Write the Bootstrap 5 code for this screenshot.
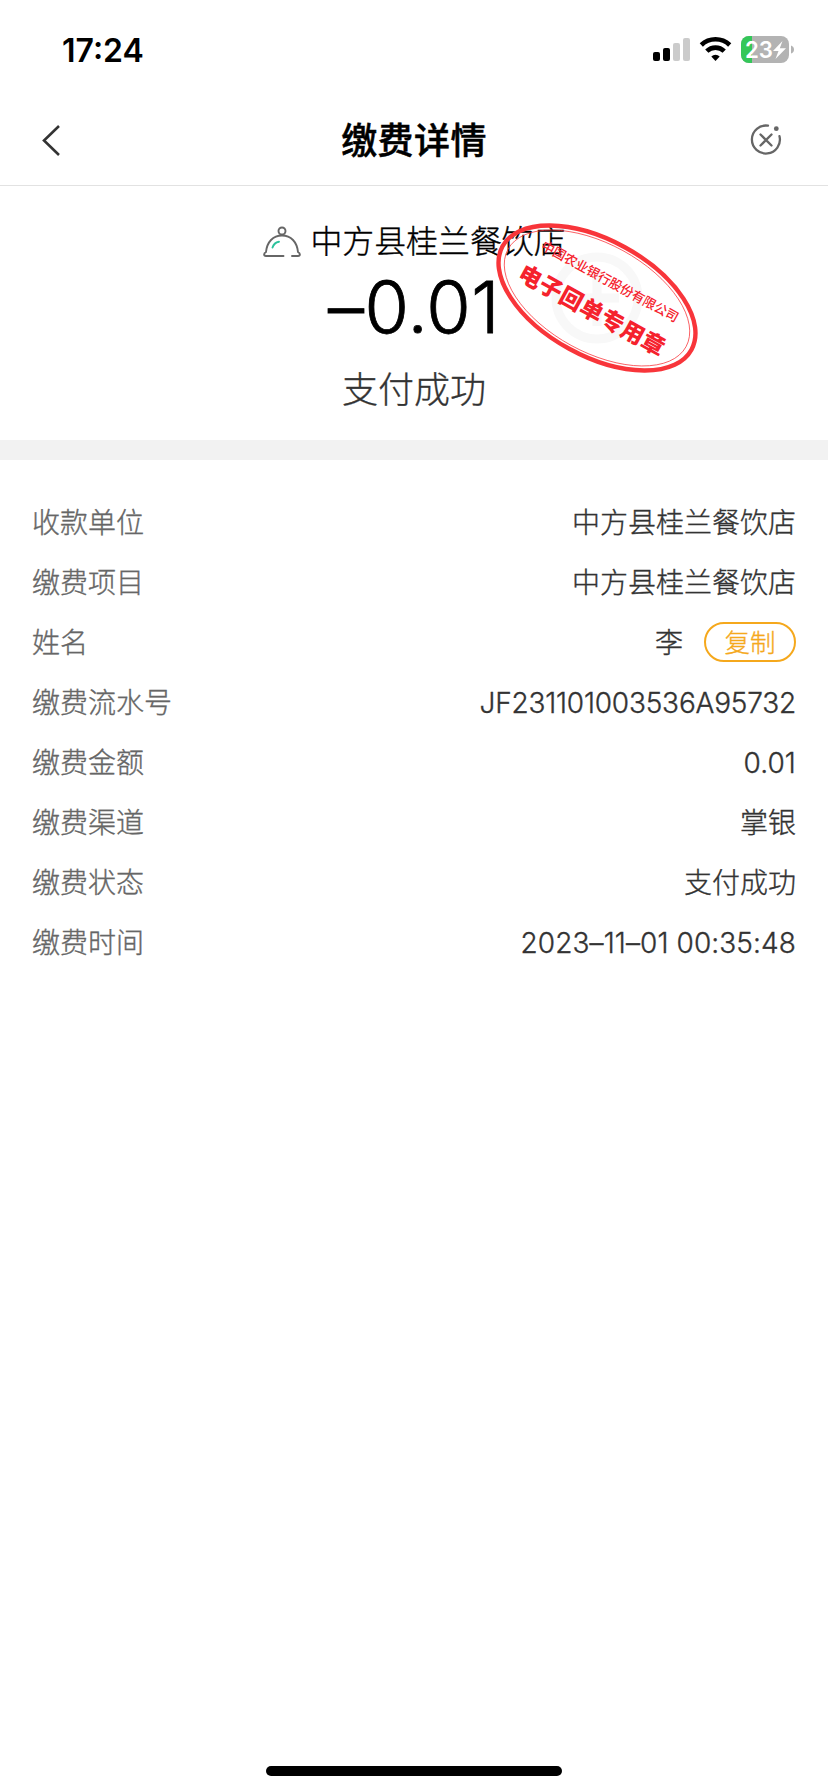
<!DOCTYPE html>
<html lang="zh-CN">
<head>
    <meta charset="UTF-8">
    <meta name="viewport" content="width=device-width, initial-scale=1.0">
    <title>缴费详情</title>
    <link href="https://cdn.jsdelivr.net/npm/bootstrap@5.3.0/dist/css/bootstrap.min.css" rel="stylesheet">
    <style>
        body {
            min-height: 1792px;
            font-family: Inter, "Noto Sans CJK SC", sans-serif;
            font-weight: 300;
            color: #333;
            background: #fff;
        }
        svg {
            display: block;
            flex: none;
        }
        .status-bar {
            height: 100px;
            padding: 0 33px 0 62px;
            color: #000;
        }
        .status-time {
            font-size: 32px;
            font-weight: 600;
            line-height: 101px;
        }
        .page-header {
            height: 86px;
            padding: 0 45px 6px 41px;
            border-bottom: 1px solid #e2e2e2;
        }
        .page-title {
            padding: 2px 0 0 16px;
            font-size: 36px;
            font-weight: 500;
            line-height: 80px;
            letter-spacing: .4px;
            color: #000;
            -webkit-text-stroke: .5px #000;
        }
        .summary {
            height: 254px;
            padding-top: 36px;
        }
        .shop-name {
            font-size: 31.9px;
            line-height: 40px;
            color: #000;
        }
        .shop-name svg {
            margin: 2px 8px 0 0;
        }
        .shop-name, .pay-state, .details {
            -webkit-text-stroke: .35px currentColor;
        }
        .amount {
            font-size: 72px;
            line-height: 90px;
            letter-spacing: .4px;
            color: #000;
            -webkit-text-stroke: .8px #000;
        }
        .amount, .details {
            font-feature-settings: "calt" 0;
        }
        .pay-state {
            padding-top: 13px;
            font-size: 36px;
            line-height: 50px;
        }
        .stamp {
            left: 487px;
            top: 28px;
        }
        .divider {
            height: 20px;
            background: #f2f2f2;
        }
        .details {
            padding: 33px 32px 0;
            font-size: 28px;
        }
        .detail-row {
            height: 60px;
            line-height: 60px;
        }
        .detail-label {
            color: #666;
        }
        .digits {
            letter-spacing: .1px;
        }
        .serial {
            letter-spacing: -.2px;
        }
        .copy-btn {
            width: 92px;
            height: 40px;
            padding: 2px 0 0;
            margin: -2px 0 0 21px;
            font-size: 25.5px;
            font-weight: 300;
            line-height: 34px;
            color: #f5a81c;
            border: 2px solid #f5a81c;
        }
        .home-bar {
            width: 296px;
            height: 10px;
            margin-bottom: 16px;
            background: #000;
        }
    </style>
</head>
<body class="d-flex flex-column">
    <div class="status-bar d-flex align-items-center justify-content-between">
        <span class="status-time">17:24</span>
        <svg width="142" height="30" viewBox="0 0 142 30">
            <!-- signal -->
            <rect x="0" y="17" width="7" height="9" rx="2"/>
            <rect x="10" y="13" width="7" height="13" rx="2"/>
            <g fill="#cbcbcb">
                <rect x="20" y="8" width="7" height="18" rx="2"/>
                <rect x="30" y="3" width="7" height="23" rx="2"/>
            </g>
            <!-- wifi -->
            <g fill="none" stroke="#000" stroke-width="4.600">
                <path d="M48.300 10A20.500 20.500 0 0 1 76.700 10"/>
                <path d="M53.800 16.200A12.400 12.400 0 0 1 71.200 16.200"/>
            </g>
            <path d="M62.500 26L58.300 21.500A6 6 0 0 1 66.700 21.500Z"/>
            <!-- battery -->
            <rect x="88" y="1" width="48" height="27" rx="8" fill="#b3b3b3"/>
            <path d="M99 1V28H96A8 8 0 0 1 88 20V9A8 8 0 0 1 96 1Z" fill="#34c759"/>
            <path d="M138 10.500Q141 11.500 141 14.500T138 18.500Z" fill="#b3b3b3"/>
            <text x="92" y="22.500" font-size="23" font-weight="600" textLength="28" lengthAdjust="spacingAndGlyphs" fill="#fff">23</text>
            <path d="M129.500 6L120 16H125.500L122.500 24L133 13.200H126.800Z" fill="#fff"/>
        </svg>
    </div>

    <header class="page-header d-flex align-items-center justify-content-between">
        <svg width="22" height="34" viewBox="0 0 22 34">
            <path d="M18 3L3 17.500L18 32" fill="none" stroke="#333" stroke-width="2.600"/>
        </svg>
        <h1 class="page-title m-0">缴费详情</h1>
        <svg width="34" height="34" viewBox="0 0 34 34" fill="none" stroke="#666" stroke-width="2.300" stroke-linecap="round">
            <path d="M19 2.700A14 14 0 1 0 30.500 13.200M11.500 11.500l11 11M22.500 11.500l-11 11"/>
            <circle cx="27.300" cy="5.700" r="2.400" fill="#666" stroke="none"/>
        </svg>
    </header>

    <section class="summary position-relative text-center">
        <div class="shop-name d-flex justify-content-center align-items-center">
            <svg width="40" height="34" viewBox="0 0 40 34" fill="none" stroke="#666" stroke-width="1.900" stroke-linecap="round">
                <circle cx="20" cy="5" r="3.500"/>
                <path d="M21.500 30H4C1.500 30 1.500 27.500 4 26C5 16 11 9.500 20 9.500S35 16 36 26C38.500 27.500 38.500 30 36 30H30"/>
                <path d="M10.500 21.500Q12 16.500 17 15.700" stroke="#2bc29c"/>
            </svg>
            <span>中方县桂兰餐饮店</span>
        </div>
        <div class="amount">–0.01</div>
        <div class="pay-state">支付成功</div>

        <!-- bank seal, drawn over the shop name -->
        <svg class="stamp position-absolute" width="220" height="168" viewBox="-110 -84 220 168">
            <g fill="none" stroke="#f8f8f8" stroke-width="9">
                <circle r="41"/>
                <path d="M0 -28V28M-22 0H22"/>
            </g>
            <g transform="rotate(28.700)">
                <g fill="none" stroke="#f8353a">
                    <ellipse rx="107.700" ry="57.900" stroke-width="4.400"/>
                    <ellipse rx="101.500" ry="54" stroke-width=".7"/>
                </g>
                <g fill="#f5222d" text-anchor="middle" font-family="Liberation Serif, Noto Sans CJK SC, serif">
                    <text x="3.500" y="-16" font-size="13" textLength="154" font-weight="500">中国农业银行股份有限公司</text>
                    <text x="1.400" y="21.500" font-size="23" textLength="163" font-weight="900">电子回单专用章</text>
                </g>
            </g>
        </svg>
    </section>

    <div class="divider"></div>

    <section class="details">
        <div class="detail-row d-flex justify-content-between">
            <span class="detail-label">收款单位</span>
            <span>中方县桂兰餐饮店</span>
        </div>
        <div class="detail-row d-flex justify-content-between">
            <span class="detail-label">缴费项目</span>
            <span>中方县桂兰餐饮店</span>
        </div>
        <div class="detail-row d-flex justify-content-between">
            <span class="detail-label">姓名</span>
            <span class="d-flex align-items-center">李<button type="button" class="btn rounded-pill copy-btn">复制</button></span>
        </div>
        <div class="detail-row d-flex justify-content-between">
            <span class="detail-label">缴费流水号</span>
            <span class="serial">JF231101003536A95732</span>
        </div>
        <div class="detail-row d-flex justify-content-between">
            <span class="detail-label">缴费金额</span>
            <span class="digits">0.01</span>
        </div>
        <div class="detail-row d-flex justify-content-between">
            <span class="detail-label">缴费渠道</span>
            <span>掌银</span>
        </div>
        <div class="detail-row d-flex justify-content-between">
            <span class="detail-label">缴费状态</span>
            <span>支付成功</span>
        </div>
        <div class="detail-row d-flex justify-content-between">
            <span class="detail-label">缴费时间</span>
            <span class="digits">2023–11–01 00:35:48</span>
        </div>
    </section>

    <div class="home-bar rounded-pill mt-auto mx-auto"></div>

    <script src="https://cdn.jsdelivr.net/npm/bootstrap@5.3.0/dist/js/bootstrap.bundle.min.js"></script>
</body>
</html>
